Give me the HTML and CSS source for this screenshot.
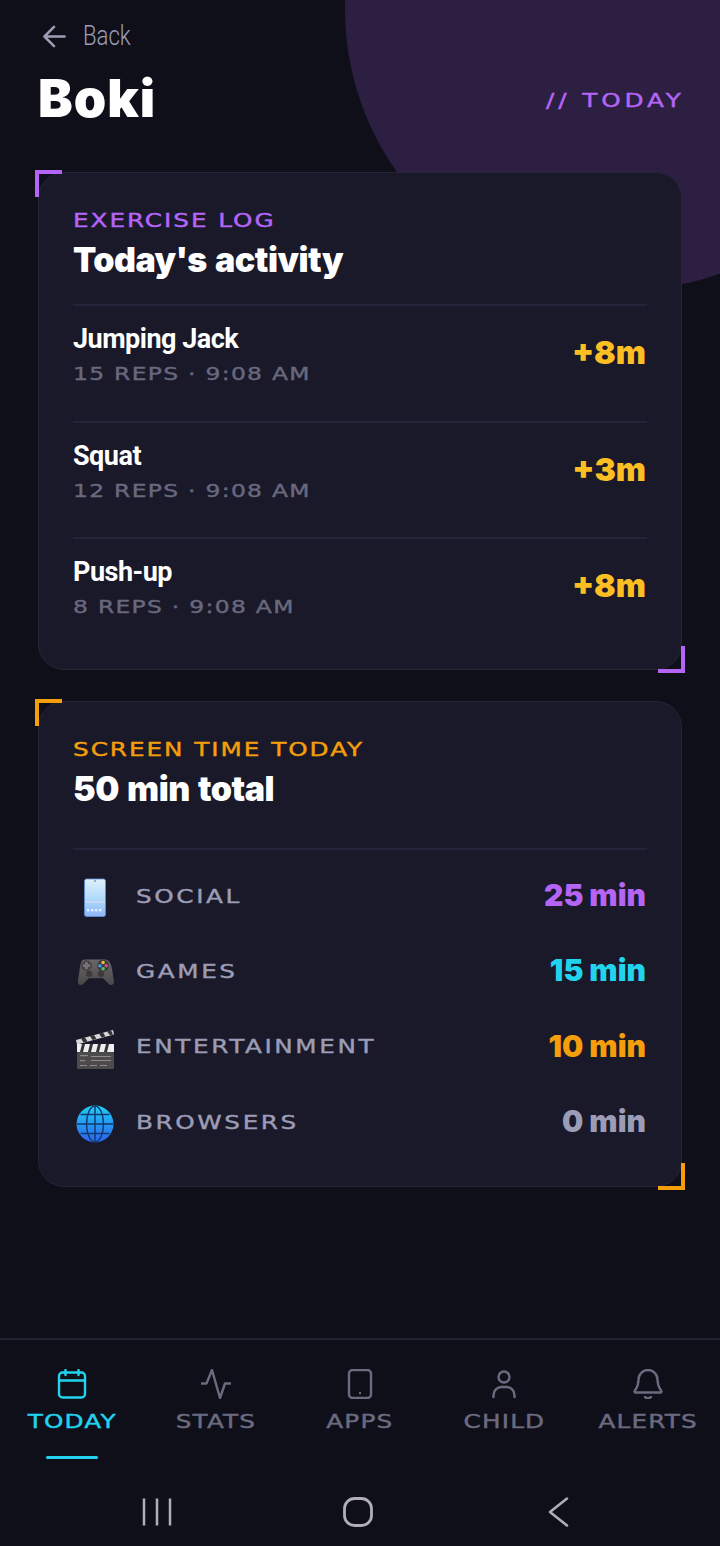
FILE: index.html
```html
<!DOCTYPE html>
<html lang="en">
<head>
    <meta charset="UTF-8">
    <meta name="viewport" content="width=device-width, initial-scale=1.0">
    <title>Boki - Today</title>
    <link rel="stylesheet" href="styles.css">
</head>
<body>
    <div class="app">
        <div class="glow"></div>

        <main class="content">
            <a class="back">
                <svg class="back-icon" viewBox="0 0 24 24" fill="none" stroke="currentColor" stroke-width="2.6" stroke-linecap="round" stroke-linejoin="round"><path d="M22.500 12H2.500M11.500 2 1.500 12l10 10"/></svg>
                <span>Back</span>
            </a>

            <header class="page-head">
                <h1>Boki</h1>
                <span class="page-tag">// TODAY</span>
            </header>

            <!-- Exercise log -->
            <section class="card card-purple">
                <div class="eyebrow">EXERCISE LOG</div>
                <h2>Today's activity</h2>
                <div class="log-list">
                    <div class="log-row">
                        <div>
                            <div class="log-name">Jumping Jack</div>
                            <div class="log-meta">15 REPS · 9:08 AM</div>
                        </div>
                        <div class="log-value">+8m</div>
                    </div>
                    <div class="log-row">
                        <div>
                            <div class="log-name">Squat</div>
                            <div class="log-meta">12 REPS · 9:08 AM</div>
                        </div>
                        <div class="log-value">+3m</div>
                    </div>
                    <div class="log-row">
                        <div>
                            <div class="log-name">Push-up</div>
                            <div class="log-meta">8 REPS · 9:08 AM</div>
                        </div>
                        <div class="log-value">+8m</div>
                    </div>
                </div>
            </section>

            <!-- Screen time -->
            <section class="card card-amber">
                <div class="eyebrow">SCREEN TIME TODAY</div>
                <h2>50 min total</h2>
                <div class="usage-list">
                    <div class="usage-row">
                        <svg class="usage-icon" viewBox="0 0 44 44">
                            <defs>
                                <linearGradient id="phone" x1="0" y1="0" x2="0" y2="1"><stop offset="0" stop-color="#dff1fd"/><stop offset=".6" stop-color="#a9d6fa"/><stop offset="1" stop-color="#8db4f5"/></linearGradient>
                                <linearGradient id="globe" x1="0" y1="0" x2="0" y2="1"><stop offset="0" stop-color="#1fd0f5"/><stop offset="1" stop-color="#2a62f0"/></linearGradient>
                                <linearGradient id="pad" x1="0" y1="0" x2="0" y2="1"><stop offset="0" stop-color="#6a6769"/><stop offset="1" stop-color="#4a4749"/></linearGradient>
                            </defs>
                            <rect x="11.500" y="3" width="21" height="37.500" rx="2" fill="url(#phone)" stroke="#5f8fd8" stroke-width=".8"/>
                            <rect x="12.500" y="25" width="19" height="2" fill="#c9d8f6"/>
                            <g fill="#e8f0ff"><rect x="14" y="33" width="2.400" height="2.400"/><rect x="18" y="33" width="2.400" height="2.400"/><rect x="22" y="33" width="2.400" height="2.400"/><rect x="26" y="33" width="2.400" height="2.400"/></g>
                            <circle cx="22" cy="5" r=".7" fill="#334"/>
                        </svg>
                        <span class="usage-name">SOCIAL</span>
                        <span class="usage-value purple">25 min</span>
                    </div>
                    <div class="usage-row">
                        <svg class="usage-icon" viewBox="0 0 44 44">
                            <g transform="translate(2.200 3) scale(.9)">
                                <path d="M11 6h22c5 0 7 5 8 11l2 13c.5 4-3 6-6 3l-6-6H15l-6 6c-3 3-6.500 1-6-3l2-13c1-6 1-11 6-11Z" fill="url(#pad)"/>
                                <circle cx="12.500" cy="13" r="6" fill="#454345"/>
                                <path d="M11 9h3v2.500h2.500v3H14V17h-3v-2.500H8.500v-3H11Z" fill="#787577"/>
                                <circle cx="31" cy="13" r="6.500" fill="#3b393b"/>
                                <circle cx="31" cy="9.500" r="2" fill="#e6c234"/><circle cx="34.500" cy="13" r="2" fill="#d9488f"/><circle cx="27.500" cy="13" r="2" fill="#3d9be9"/><circle cx="31" cy="16.500" r="2" fill="#4cc06a"/>
                                <circle cx="15.500" cy="22" r="3.500" fill="#3b393b"/><circle cx="28.500" cy="22" r="3.500" fill="#3b393b"/>
                            </g>
                        </svg>
                        <span class="usage-name">GAMES</span>
                        <span class="usage-value cyan">15 min</span>
                    </div>
                    <div class="usage-row">
                        <svg class="usage-icon" viewBox="0 0 44 44">
                            <path d="M3 13 40 3l1 4.500L4 17.500Z" fill="#d8d8dc"/>
                            <g fill="#333"><path d="M8 11.500l4-1 2.500 4-4 1Z"/><path d="M17 9l4-1 2.500 4-4 1Z"/><path d="M26 6.500l4-1 2.500 4-4 1Z"/><path d="M34 4.500l4-1 2 4-3 .8Z"/></g>
                            <rect x="4" y="17" width="37" height="8" fill="#eeeeee"/>
                            <g fill="#333"><path d="M9 17h3l-2 8H7Z"/><path d="M17 17h3l-2 8h-3Z"/><path d="M25 17h3l-2 8h-3Z"/><path d="M33 17h3l-2 8h-3Z"/></g>
                            <rect x="4" y="25" width="37" height="17" rx="1.500" fill="#4d4a4c"/>
                            <g fill="#8d8a8c"><rect x="7" y="28" width="8" height="1.200"/><rect x="18" y="29" width="20" height="1"/><rect x="7" y="33" width="5" height="1.200"/><rect x="18" y="33" width="20" height="1"/><rect x="7" y="38" width="7" height="1"/><rect x="17" y="38" width="7" height="1"/><rect x="27" y="38" width="7" height="1"/></g>
                        </svg>
                        <span class="usage-name">ENTERTAINMENT</span>
                        <span class="usage-value amber">10 min</span>
                    </div>
                    <div class="usage-row">
                        <svg class="usage-icon" viewBox="0 0 44 44">
                            <circle cx="22" cy="22" r="18.500" fill="url(#globe)"/>
                            <g fill="none" stroke="#123a6e" stroke-width="1.500">
                                <ellipse cx="22" cy="22" rx="8.500" ry="18"/>
                                <path d="M22 4v36M4 22h36M7.500 12.500h29M7.500 31.500h29"/>
                            </g>
                        </svg>
                        <span class="usage-name">BROWSERS</span>
                        <span class="usage-value grey">0 min</span>
                    </div>
                </div>
            </section>
        </main>

        <nav class="tabbar">
            <a class="tab active">
                <svg class="tab-icon" viewBox="0 0 30 30" fill="none" stroke="currentColor" stroke-width="2.400" stroke-linecap="round" stroke-linejoin="round"><rect x="2" y="3.500" width="26" height="25" rx="3.500"/><path d="M2 11.500h26M8.500 1v5M21.500 1v5"/></svg>
                <span>TODAY</span>
            </a>
            <a class="tab">
                <svg class="tab-icon" viewBox="0 0 30 30" fill="none" stroke="currentColor" stroke-width="2.400" stroke-linecap="round" stroke-linejoin="round"><path d="M0 14.500h5.500L11 1l8 28 5-14.500h6"/></svg>
                <span>STATS</span>
            </a>
            <a class="tab">
                <svg class="tab-icon" viewBox="0 0 30 30" fill="none" stroke="currentColor" stroke-width="2.400" stroke-linecap="round" stroke-linejoin="round"><rect x="4" y="1" width="22" height="28" rx="3.500"/><path d="M15 24h.01"/></svg>
                <span>APPS</span>
            </a>
            <a class="tab">
                <svg class="tab-icon" viewBox="0 0 30 30" fill="none" stroke="currentColor" stroke-width="2.400" stroke-linecap="round" stroke-linejoin="round"><circle cx="15" cy="8" r="5.500"/><path d="M4.500 28v-2a8 8 0 0 1 8-8h5a8 8 0 0 1 8 8v2"/></svg>
                <span>CHILD</span>
            </a>
            <a class="tab">
                <svg class="tab-icon" viewBox="0 0 30 30" fill="none" stroke="currentColor" stroke-width="2.400" stroke-linecap="round" stroke-linejoin="round"><path d="M15 1a9.500 9.500 0 0 0-9.500 9.500c0 8-3.500 10-4 12 0 .7.500 1 1 1h25c.5 0 1-.3 1-1-.5-2-4-4-4-12A9.500 9.500 0 0 0 15 1Z"/><path d="M12 28c1.500 1.500 4.500 1.500 6 0"/></svg>
                <span>ALERTS</span>
            </a>
        </nav>

        <!-- Android buttons -->
        <div class="sysbar">
            <svg class="sys-icon" viewBox="0 0 30 30" fill="none" stroke="currentColor" stroke-width="2.500"><path d="M2 1.500v27M15 1.500v27M28 1.500v27"/></svg>
            <svg class="sys-icon" viewBox="0 0 30 30" fill="none" stroke="currentColor" stroke-width="2.800"><rect x="1.500" y="1.500" width="27" height="27" rx="10"/></svg>
            <svg class="sys-icon" viewBox="0 0 30 30" fill="none" stroke="currentColor" stroke-width="2.500" stroke-linecap="round" stroke-linejoin="round"><path d="M23 1.500 6 15l17 13.500"/></svg>
        </div>
    </div>
</body>
</html>
```

FILE: styles.css
```css
body, html {
    margin: 0;
    padding: 0;
    background: #0f0f1a;
}

.app {
    position: relative;
    width: 720px;
    height: 1546px;
    overflow: hidden;
    display: flex;
    flex-direction: column;
    background: #0f0f1a;
    color: #fff;
    font-family: "Roboto", sans-serif;
}

/* purple circle behind the header */
.glow {
    position: absolute;
    top: -271px;
    right: -186px;
    width: 561px;
    height: 561px;
    border-radius: 50%;
    background: #2d1f42;
}

.content {
    position: relative;
    flex: 1;
    padding: 20px 38px 0;
}

.back {
    display: flex;
    align-items: center;
    gap: 17px;
    height: 32px;
    padding-left: 5px;
    color: #9d9db8;
    font-size: 27px;
    font-weight: 300;
}

.back-icon {
    width: 23px;
    height: 23px;
}

.back span {
    transform: scaleX(.82);
    transform-origin: left;
}

.page-head {
    display: flex;
    justify-content: space-between;
    align-items: center;
    height: 60px;
    margin: 17px 0 43px;
}

h1 {
    margin: 0;
    font-family: "Inter", sans-serif;
    font-size: 52px;
    font-weight: 900;
    line-height: 60px;
    letter-spacing: 1px;
}

/* DejaVu stretched sideways to get the wide techno labels */
.page-tag,
.eyebrow,
.log-meta,
.usage-name,
.tab span {
    font-family: "DejaVu Sans", sans-serif;
    transform: scaleX(1.3);
    -webkit-text-stroke: .4px currentColor;
}

.page-tag {
    margin: 2px -3px 0 0;
    font-size: 19px;
    letter-spacing: 3px;
    color: #b565f5;
    transform-origin: right;
}

.card {
    position: relative;
    box-sizing: border-box;
    width: 644px;
    padding: 35px 34px 0;
    background: #191929;
    border: 1px solid #25253a;
    border-radius: 26px;
}

.card-purple {
    height: 498px;
    margin-bottom: 31px;
    --accent: #b565f5;
}

.card-amber {
    height: 486px;
    --accent: #f59e0b;
}

/* corner brackets */
.card::before,
.card::after {
    content: "";
    position: absolute;
    width: 23px;
    height: 23px;
    border: 0 solid var(--accent);
}

.card::before {
    top: -3px;
    left: -4px;
    border-width: 4px 0 0 4px;
}

.card::after {
    right: -4px;
    bottom: -4px;
    border-width: 0 4px 4px 0;
}

.eyebrow {
    height: 24px;
    font-size: 19px;
    line-height: 24px;
    letter-spacing: 1.5px;
    color: var(--accent);
    transform-origin: left;
}

h2 {
    margin: 6px 0 0;
    font-family: "Inter", sans-serif;
    font-size: 34px;
    font-weight: 900;
    line-height: 44px;
    letter-spacing: -.5px;
    word-spacing: 2px;
}

.log-list {
    margin-top: 22px;
}

.log-row {
    display: flex;
    justify-content: space-between;
    align-items: center;
    box-sizing: border-box;
    height: 116.500px;
    padding-bottom: 18px;
    border-top: 2px solid #23233a;
}

.log-name {
    font-size: 27px;
    font-weight: 700;
    line-height: 34px;
    letter-spacing: -.5px;
}

.log-meta {
    margin-top: 6px;
    font-size: 18px;
    line-height: 24px;
    letter-spacing: 1px;
    color: #68687f;
    transform-origin: left;
}

.log-value {
    margin: 0 1px 3px 0;
    font-family: "Inter", sans-serif;
    font-size: 32px;
    font-weight: 900;
    color: #fbbf24;
}

.usage-list {
    margin-top: 37px;
    padding-top: 8px;
    border-top: 2px solid #23233a;
}

.usage-row {
    display: flex;
    align-items: center;
    height: 75.300px;
}

.usage-icon {
    width: 44px;
    height: 44px;
    margin: 5px 19px 0 0;
}

.usage-name {
    flex: 1;
    font-size: 19px;
    letter-spacing: 2px;
    color: #9c9cb6;
    transform-origin: left;
}

.usage-value {
    margin: 0 1px 1px 0;
    font-family: "Inter", sans-serif;
    font-size: 30px;
    font-weight: 900;
}

.purple { color: #b565f5; }
.cyan { color: #22d3ee; }
.amber { color: #f59e0b; }
.grey { color: #9c9cb6; }

.tabbar {
    position: relative;
    display: flex;
    height: 134px;
    box-sizing: border-box;
    border-top: 2px solid #22222f;
}

.tab {
    position: relative;
    flex: 1;
    display: flex;
    flex-direction: column;
    align-items: center;
    padding-top: 29px;
    color: #6b6b80;
    font-size: 19px;
}

.tab span {
    margin-top: 10px;
    line-height: 24px;
    letter-spacing: .9px;
}

.tab-icon {
    width: 30px;
    height: 30px;
}

.tab.active {
    color: #22d3ee;
}

.tab.active::after {
    content: "";
    position: absolute;
    left: 46px;
    bottom: 13px;
    width: 52px;
    height: 3px;
    border-radius: 2px;
    background: #22d3ee;
}

.sysbar {
    display: flex;
    height: 74px;
    justify-content: center;
    gap: 171px;
    padding: 25px 5px 0 0;
    box-sizing: border-box;
    color: #b0b0b4;
}

.sys-icon {
    width: 30px;
    height: 30px;
}
```
